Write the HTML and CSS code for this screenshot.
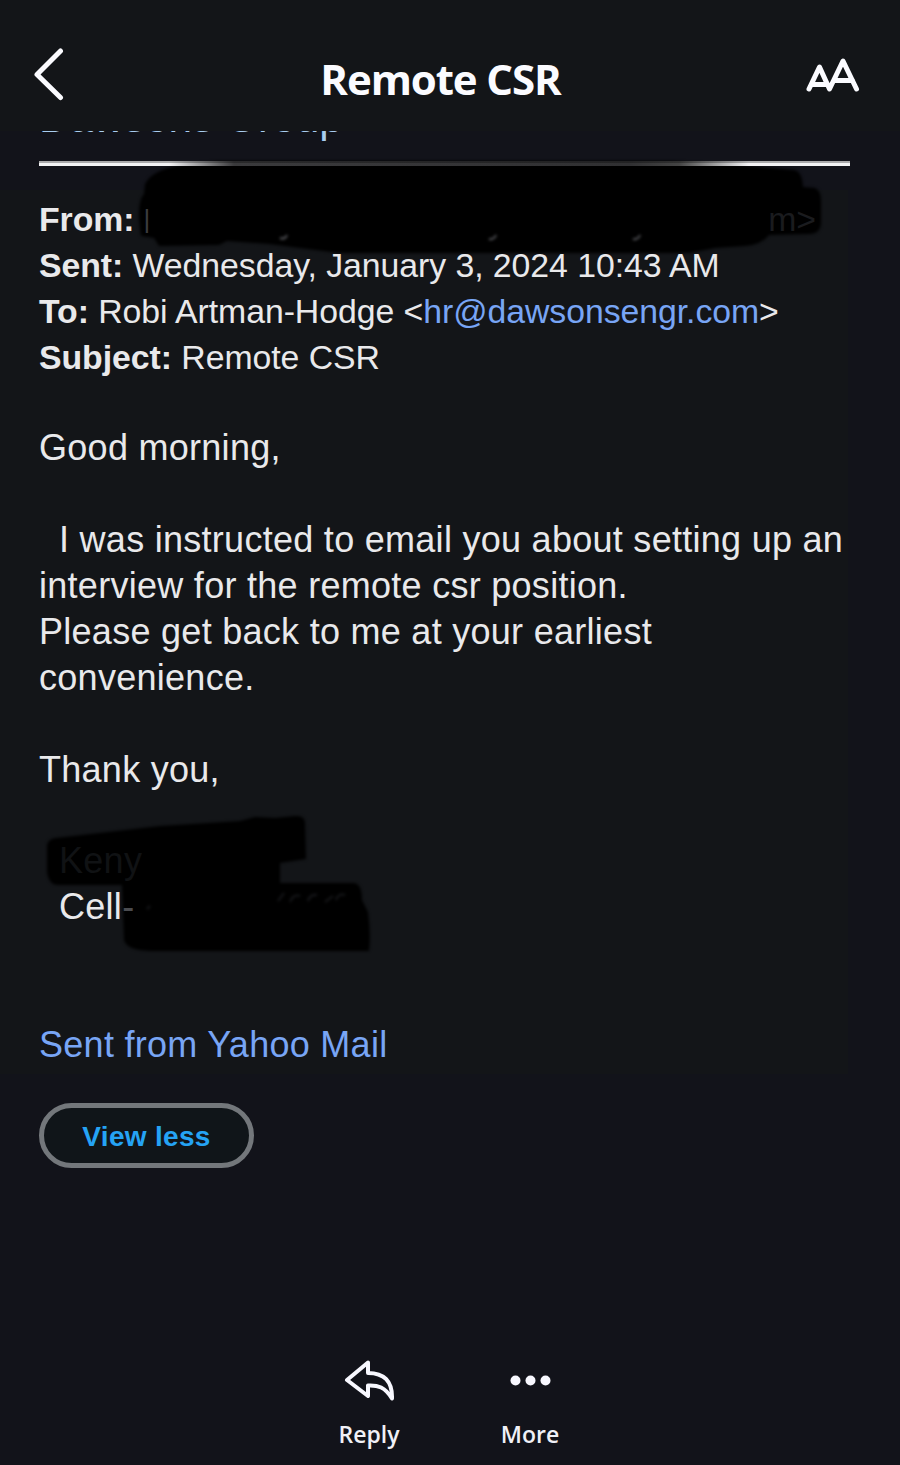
FILE: index.html
```html
<!DOCTYPE html>
<html lang="en">
<head>
<meta charset="utf-8">
<title>Remote CSR</title>
<meta name="viewport" content="width=device-width, initial-scale=1">
<link rel="stylesheet" href="styles.css">
</head>
<body>
  <header class="topbar">
    <svg class="back" width="32" height="56" viewBox="0 0 32 56"><path d="M26.500 3L3 26.500L26.500 49.500"/></svg>
    <h1>Remote CSR</h1>
    <svg class="text-size" width="56" height="40" viewBox="0 0 56 40"><path d="M3 33L13.500 11L23.500 33L37 5L50.500 33M7 28.500H21M28 24.500H46.500"/></svg>
  </header>

  <main class="message">
    <div class="company"><span>Dawsons Group</span></div>
    <div class="rule"></div>

    <div class="mail">
      <svg class="scribble scribble-from" width="690" height="95" viewBox="0 0 690 95">
        <path d="M6 22Q14 6 50 2L80 -1H530L600 3L655 8Q663 9 664 25L676 26Q682 28 682 40V60Q682 72 670 72L630 73Q622 83 606 84L576 86L550 91H200L130 82L88 79L80 83L20 84L15 76L2 74Q-3 40 5 32Z"/>
        <g class="remains"><path d="M148 73q-2 5-7 3M357 73q-2 5-7 4M501 73q-2 5-7 4"/></g>
      </svg>
      <div class="mail-head">
        <p class="line l-from"><b>From:</b> <span class="faint-bar">|</span><span class="faint-end">m&gt;</span></p>
        <p class="line"><b>Sent:</b> Wednesday, January 3, 2024 10:43 AM</p>
        <p class="line"><b>To:</b> Robi Artman-Hodge &lt;<a>hr@dawsonsengr.com</a>&gt;</p>
        <p class="line"><b>Subject:</b> Remote CSR</p>
      </div>
      <p class="line gap">Good morning,</p>
      <p class="line gap indent">I was instructed to email you about setting up an</p>
      <p class="line">interview for the remote csr position.</p>
      <p class="line">Please get back to me at your earliest</p>
      <p class="line">convenience.</p>
      <p class="line gap">Thank you,</p>
      <div class="signature gap">
        <svg class="scribble scribble-sign" width="340" height="145" viewBox="0 0 340 145">
          <path d="M7 35Q8 29 16 28L120 16L200 11L215 7L235 8L255 6Q264 5 265 12L266 49L240 53L240 73L314 73Q322 74 322 90L328 102Q331 125 329 141H110Q86 140 84 130L82 75H18Q9 75 7 62Z"/>
          <g class="remains remains-cell"><path d="M107 99l3-3M238 91l6-8M250 92q3-8 10-6M268 91q2-7 9-6M285 92l8-6M296 90q2-7 9-5"/></g>
        </svg>
        <p class="line indent faint-name">Keny</p>
        <p class="line indent">Cell<span class="dash">-</span></p>
      </div>
      <p class="line sent-from"><a>Sent from Yahoo Mail</a></p>
    </div>

    <button class="view-less">View less</button>
  </main>

  <footer class="actions">
    <div class="action">
      <svg width="54" height="44" viewBox="0 0 54 44"><path class="reply" d="M26 5.500L5 23L26 39V28.500C36 28 43 30 50 41.500C50.500 24 42 16 26 16Z"/></svg>
      <span>Reply</span>
    </div>
    <div class="action">
      <svg width="54" height="44" viewBox="0 0 54 44"><circle cx="12.500" cy="23.500" r="5"/><circle cx="27.500" cy="23.500" r="5"/><circle cx="42.500" cy="23.500" r="5"/></svg>
      <span>More</span>
    </div>
  </footer>
</body>
</html>
```
FILE: styles.css
```css
* { box-sizing: border-box; }
body { margin: 0; height: 1465px; overflow: hidden; display: flex; flex-direction: column; background-color: #12131a; color: #e9e9eb; font-family: "Liberation Sans", Arial, sans-serif; }
h1, p { margin: 0; }

.topbar { height: 131px; flex: none; padding: 21px 38px 0 34px; display: flex; align-items: center; justify-content: space-between; background-color: #131518; }
.topbar h1 { font: bold 42px/58px "Open Sans", "Noto Sans", sans-serif; letter-spacing: -1.1px; color: #fbfbff; padding: 5px 0 0 9px; }
.topbar svg { fill: none; stroke: #fbfbff; stroke-width: 5; stroke-linecap: round; stroke-linejoin: round; }

.message { padding: 0 50px 0 39px; flex: 1; background: linear-gradient(#131518, #131518) no-repeat 0 59px / 848px 884px; }
.company { height: 30px; overflow: hidden; font-size: 42.4px; line-height: 48px; color: #a9cdf0; }
.company span { display: block; margin-top: -37px; }
.rule { position: relative; z-index: 1; height: 5px; background: linear-gradient(rgba(0,0,0,0.3) 2px, transparent 2px), linear-gradient(90deg, #f2f2f4 130px, #3a3a3c 195px, #303032 590px, #444 640px, #f2f2f4 710px); }

.mail { position: relative; isolation: isolate; padding-top: 30px; }
.line { height: 45.9px; line-height: 45.9px; font-size: 36px; letter-spacing: 0.28px; white-space: nowrap; }
.mail-head .line { font-size: 33.8px; letter-spacing: -0.05px; line-height: 46.8px; }
.gap { margin-top: 45.9px; }
.indent { padding-left: 20px; }
.mail a { color: #78a5f5; }
.sent-from { margin-top: 91.8px; }

/* marker strokes hiding the private parts */
.scribble { position: absolute; z-index: -1; fill: #000; filter: blur(1.5px); overflow: visible; }
.scribble-from { left: 100px; top: -4px; }
.scribble-sign { left: 1px; top: -28px; }
.remains { fill: none; stroke: #55565a; stroke-width: 2; }
.remains-cell { stroke: #17181b; }
.signature { position: relative; }
.l-from { display: flex; align-items: center; padding-right: 34px; }
.faint-bar { font-size: 26px; color: #3c3c3f; margin-left: 9px; }
.faint-end { color: #1a1b1e; margin-left: auto; }
.faint-name { color: #101214; }
.dash { color: #4b4c50; }

.view-less { display: block; width: 215px; height: 65px; margin-top: 35px; padding: 3px 0 0; border: 5px solid #73777b; border-radius: 33px; background-color: #101519; color: #25a3f4; font: bold 28px "Liberation Sans", Arial, sans-serif; letter-spacing: 0.3px; }

.actions { display: flex; justify-content: center; gap: 61px; height: 108px; flex: none; padding-right: 1px; color: #f0f0f6; }
.action { width: 100px; display: flex; flex-direction: column; align-items: center; font: 600 23px/32px "Open Sans", "Noto Sans", sans-serif; }
.action svg { fill: #f8f8ff; margin-bottom: 17px; }
.action .reply { fill: none; stroke: #f8f8ff; stroke-width: 4; stroke-linejoin: round; }
```
